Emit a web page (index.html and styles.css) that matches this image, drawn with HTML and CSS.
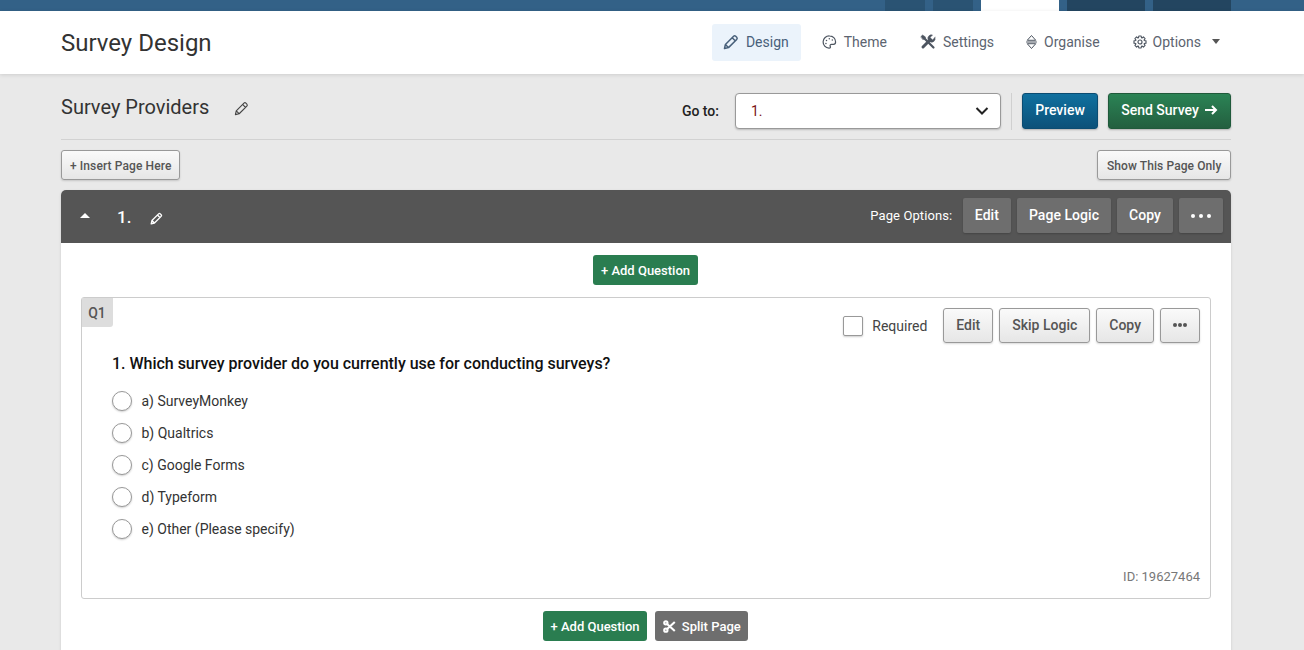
FILE: index.html
```html
<!DOCTYPE html>
<html lang="en">
<head>
<meta charset="utf-8">
<title>Survey Design</title>
<link rel="stylesheet" href="styles.css">
</head>
<body>
<div class="topbar">
  <span class="tab t1"></span><span class="tab t2"></span><span class="tab active"></span><span class="tab t3"></span><span class="tab t4"></span>
</div>
<header class="header">
  <h1 class="title">Survey Design</h1>
  <nav class="nav">
    <a class="nav-item current"><svg class="nav-ic" viewBox="0 0 16 16"><path d="M1.500 14.500l.9-4L10.600 2.300a1.500 1.500 0 0 1 2.100 0l1 1a1.500 1.500 0 0 1 0 2.100l-8.200 8.200zM9.200 3.700l3 3M2.400 10.500l3 3"/></svg><span>Design</span></a>
    <a class="nav-item"><svg class="nav-ic w15" viewBox="0 0 16 16"><path d="M8 1.500a6.500 6.500 0 0 0-.6 13c1.500.1 1.900-.9 1.400-1.800-.6-1.100.1-2.200 1.300-2.200h2.100c1.500 0 2.300-1 2.300-2.600C14.500 4.300 11.600 1.500 8 1.500z"/><circle cx="4.800" cy="6.300" r=".8"/><circle cx="7.800" cy="4.400" r=".8"/><circle cx="11" cy="5.800" r=".8"/><circle cx="4.200" cy="9.500" r=".8"/></svg><span>Theme</span></a>
    <a class="nav-item nudge"><svg class="nav-ic tools" viewBox="0 0 16 16"><path class="driver" d="M3 3l10.500 10.500"/><path class="tip" d="M1 2.500L2.500 1l3 2-.5 2-2 .5z"/><path class="wrench" d="M3 13L10.500 5.500"/><path class="tip" d="M15 3.500l-2.300 2.200-2-.4-.4-2L12.500 1a3.600 3.600 0 0 0-4.500 4.600l2.400 2.400A3.600 3.600 0 0 0 15 3.500z"/></svg><span>Settings</span></a>
    <a class="nav-item"><svg class="nav-ic w11" viewBox="0 0 11 16"><path d="M1.500 6L5.500 1.500 9.500 6zM.5 8h10M1.500 10l4 4.500 4-4.500z"/></svg><span>Organise</span></a>
    <a class="nav-item nudge"><svg class="nav-ic w14" viewBox="0 0 16 16"><polygon points="6.310,3.080 6.660,1.130 9.340,1.130 9.690,3.080 10.280,3.330 11.910,2.200 13.800,4.090 12.670,5.720 12.920,6.310 14.870,6.660 14.870,9.340 12.920,9.690 12.670,10.280 13.800,11.910 11.910,13.800 10.280,12.670 9.690,12.920 9.340,14.870 6.660,14.870 6.310,12.920 5.720,12.670 4.090,13.800 2.200,11.910 3.330,10.280 3.080,9.690 1.130,9.340 1.130,6.660 3.080,6.310 3.330,5.720 2.200,4.090 4.090,2.200 5.720,3.330"/><circle class="hub" cx="8" cy="8" r="2.300"/></svg><span>Options</span><span class="caret"></span></a>
  </nav>
</header>
<main class="main">
  <div class="survey-head">
    <div class="survey-name">
      <h2>Survey Providers</h2>
      <svg class="pencil" viewBox="0 0 16 16"><path d="M1.500 14.500l.9-4L10.600 2.300a1.500 1.500 0 0 1 2.100 0l1 1a1.500 1.500 0 0 1 0 2.100l-8.200 8.200zM9.200 3.700l3 3M2.400 10.500l3 3"/></svg>
    </div>
    <div class="survey-actions">
      <label class="goto-label">Go to:</label>
      <div class="goto"><span>1.</span><svg viewBox="0 0 14 10"><path d="M1.500 2L7 7.500 12.500 2"/></svg></div>
      <span class="divider"></span>
      <button class="btn-lg blue">Preview</button>
      <button class="btn-lg green">Send Survey<svg viewBox="0 0 14 12"><path d="M1 6h11M8 2l4 4-4 4"/></svg></button>
    </div>
  </div>
  <div class="insert-row">
    <button class="btn-sm narrow">+ Insert Page Here</button>
    <button class="btn-sm wide">Show This Page Only</button>
  </div>
  <section class="page">
    <div class="page-bar">
      <div class="page-left">
        <span class="up"></span>
        <span class="page-no">1.</span>
        <svg class="pencil white" viewBox="0 0 16 16"><path d="M1.500 14.500l.9-4L10.600 2.300a1.500 1.500 0 0 1 2.100 0l1 1a1.500 1.500 0 0 1 0 2.100l-8.200 8.200zM9.200 3.700l3 3M2.400 10.500l3 3"/></svg>
      </div>
      <div class="page-right">
        <span class="page-opt">Page Options:</span>
        <button class="btn-dark">Edit</button>
        <button class="btn-dark">Page Logic</button>
        <button class="btn-dark">Copy</button>
        <button class="btn-dark more"><i></i><i></i><i></i></button>
      </div>
    </div>
    <div class="page-body">
      <div class="add-row"><button class="btn-add">+ Add Question</button></div>
      <article class="question">
        <span class="q-tag">Q1</span>
        <div class="q-tools">
          <span class="check"></span><span class="req">Required</span>
          <button class="btn-q">Edit</button>
          <button class="btn-q">Skip Logic</button>
          <button class="btn-q">Copy</button>
          <button class="btn-q dots"><i></i><i></i><i></i></button>
        </div>
        <h3 class="q-text">1. Which survey provider do you currently use for conducting surveys?</h3>
        <ul class="answers">
          <li><span class="radio"></span>a) SurveyMonkey</li>
          <li><span class="radio"></span>b) Qualtrics</li>
          <li><span class="radio"></span>c) Google Forms</li>
          <li><span class="radio"></span>d) Typeform</li>
          <li><span class="radio"></span>e) Other (Please specify)</li>
        </ul>
        <div class="q-id">ID: 19627464</div>
      </article>
      <div class="add-row bottom">
        <button class="btn-add">+ Add Question</button>
        <button class="btn-split"><svg viewBox="0 0 16 16"><circle cx="3.500" cy="3.500" r="2"/><circle cx="3.500" cy="12.500" r="2"/><path d="M5 5l9.500 8.500M5 11L14.500 2.500"/></svg>Split Page</button>
      </div>
    </div>
  </section>
</main>
</body>
</html>
```
FILE: styles.css
```css
* { box-sizing: border-box; }
html, body { margin: 0; padding: 0; height: 650px; overflow: hidden; }
body { background: #e9e9e9; font-family: Roboto, "Liberation Sans", sans-serif; color: #333; }
button { font-family: inherit; cursor: pointer; }

.topbar { height: 11px; background: #336187; display: flex; padding-left: 885px; }
.tab { display: block; height: 11px; background: #2a5373; }
.t1 { width: 40px; margin-right: 8px; }
.t2 { width: 40px; margin-right: 8px; }
.active { width: 78px; background: #fff; margin-right: 8px; }
.t3 { width: 78px; margin-right: 8px; background: #234560; }
.t4 { width: 78px; background: #234560; }

.header { height: 63px; background: #fff; display: flex; align-items: center; justify-content: space-between; padding: 0 73px 0 61px; box-shadow: 0 1px 4px rgba(0,0,0,.12); position: relative; }
.title { margin: 0; font-size: 24px; font-weight: 400; color: #333; }
.nav { display: flex; align-items: center; gap: 10px; }
.nav-item { display: flex; align-items: center; height: 37px; padding: 0 11px; font-size: 14px; color: #5c6470; border-radius: 3px; }
.nav-item span { position: relative; top: -1px; }
.nav-item.nudge { margin-left: 1px; }
.nav-item.current { background: #ebf3fb; color: #48607a; padding-right: 12px; }
.nav-ic { width: 16px; height: 16px; margin-right: 7px; fill: none; stroke: #4d5560; stroke-width: 1.300; stroke-linejoin: round; stroke-linecap: round; flex: none; position: relative; top: -1px; }
.nav-ic circle { fill: #4d5560; stroke-width: 0; }
.nav-ic circle.hub { fill: none; stroke-width: 1.300; }
.current .nav-ic { stroke: #48607a; stroke-width: 1.500; }
.w15 { width: 15px; }
.w14 { width: 14px; margin-right: 6px; }
.w11 { width: 11px; stroke-width: 1; }
.tools .driver { stroke-width: 2.200; }
.tools .wrench { stroke-width: 3; }
.tools .tip { fill: #4d5560; stroke-width: .5; }
.caret { width: 0; height: 0; margin-left: 11px; border: 4.500px solid transparent; border-top: 5px solid #555; border-bottom: 0; }

.main { padding: 0 73px 0 61px; }
.survey-head { height: 66px; display: flex; align-items: center; justify-content: space-between; border-bottom: 1px solid #d2d2d2; padding-top: 9px; }
.survey-name { display: flex; align-items: center; padding-bottom: 8px; }
.survey-name h2 { margin: 0; font-size: 20px; font-weight: 400; color: #333; }
.pencil { width: 15px; height: 15px; margin-left: 25px; margin-top: 3px; fill: none; stroke: #444; stroke-width: 1.200; stroke-linejoin: round; }
.survey-actions { display: flex; align-items: center; }
.goto-label { font-size: 14px; font-weight: 500; color: #222; margin-right: 16px; }
.goto { width: 266px; height: 36px; background: #fff; border: 1px solid #999; border-radius: 4px; display: flex; align-items: center; justify-content: space-between; padding: 0 11px 0 15px; font-size: 14px; color: #7a1515; box-shadow: 0 1px 2px rgba(0,0,0,.2); }
.goto svg { width: 14px; height: 10px; fill: none; stroke: #222; stroke-width: 2; }
.divider { width: 1px; height: 37px; background: #d0d0d0; margin: 0 10px; }
.btn-lg { height: 36px; border-radius: 3px; font-size: 14px; font-weight: 500; color: #fff; display: flex; align-items: center; border: 1px solid; padding: 0 0 2px; justify-content: center; box-shadow: 0 1px 2px rgba(0,0,0,.25); }
.blue { width: 76px; background: linear-gradient(#10709f, #0c5179); border-color: #0b4c72; margin-right: 10px; }
.green { width: 123px; background: linear-gradient(#2b8355, #235f3f); border-color: #205a3b; }
.green svg { width: 14px; height: 12px; margin-left: 5px; fill: none; stroke: #fff; stroke-width: 2; }

.insert-row { display: flex; justify-content: space-between; padding-top: 10px; height: 50px; }
.btn-sm { height: 30px; background: linear-gradient(#fafafa, #e6e6e6); border: 1px solid #999; border-radius: 3px; font-size: 12px; font-weight: 500; color: #555; box-shadow: 0 1px 2px rgba(0,0,0,.15); letter-spacing: .1px; }
.btn-sm.narrow { padding: 1px 8px 0; }
.btn-sm.wide { padding: 1px 8.500px 0; }

.page { background: #fff; border-radius: 5px 5px 0 0; box-shadow: 0 1px 3px rgba(0,0,0,.12); padding-bottom: 40px; }
.page-bar { height: 53px; background: #555; border-radius: 5px 5px 0 0; display: flex; align-items: center; justify-content: space-between; padding: 0 8px 2px 19px; }
.page-left { display: flex; align-items: center; color: #fff; padding-top: 2px; }
.up { width: 0; height: 0; border: 5px solid transparent; border-bottom: 5px solid #fff; border-top: 0; margin-bottom: 3px; }
.page-no { font-size: 17px; font-weight: 500; margin-left: 27px; }
.pencil.white { margin-left: 19px; width: 13px; height: 13px; stroke: #fff; stroke-width: 1.700; margin-top: 3px; }
.page-right { display: flex; align-items: center; }
.page-opt { font-size: 13px; color: #fff; margin-right: 10.500px; letter-spacing: .1px; padding-bottom: 1px; }
.btn-dark { height: 35px; background: #6e6e6e; border: 0; border-radius: 2px; color: #fff; font-size: 14px; font-weight: 500; padding: 0 12px 2px; margin-right: 6px; letter-spacing: .05px; box-shadow: 0 1px 2px rgba(0,0,0,.2); }
.btn-dark:last-child { margin-right: 0; }
.more { width: 44px; display: flex; align-items: center; justify-content: center; gap: 4px; padding: 0; }
.more i { width: 4px; height: 4px; border-radius: 50%; background: #fff; }

.page-body { padding: 12px 20px 0; }
.add-row { display: flex; justify-content: center; height: 30px; margin-bottom: 12px; padding-right: 1px; }
.add-row.bottom { gap: 8px; margin: 12px 0 0; }
.btn-add { height: 30px; background: #2a7d50; border: 0; border-radius: 3px; color: #fff; font-size: 13px; font-weight: 500; padding: 0 7.750px; }
.btn-split { height: 30px; background: #6e6e6e; border: 0; border-radius: 3px; color: #fff; font-size: 13px; font-weight: 500; padding: 0 7.500px; display: flex; align-items: center; }
.btn-split svg { width: 13px; height: 13px; margin-right: 6px; fill: none; stroke: #fff; stroke-width: 2.600; }

.question { position: relative; height: 302px; border: 1px solid #ccc; border-radius: 3px; padding: 0 10px 0 30px; }
.q-tag { position: absolute; left: 0; top: 0; width: 31px; height: 29px; background: #ddd; color: #555; font-size: 14px; font-weight: 500; display: flex; align-items: center; justify-content: center; border-radius: 0 0 3px 0; padding-right: 1px; }
.q-tools { display: flex; align-items: center; justify-content: flex-end; height: 35px; margin-top: 10px; }
.check { width: 20px; height: 20px; border: 1px solid #999; border-radius: 2px; background: #fff; margin-right: 9px; box-shadow: 0 1px 2px rgba(0,0,0,.2); }
.req { font-size: 14px; color: #444; margin-right: 16px; }
.btn-q { height: 35px; padding: 0 12px 2px; margin-right: 6px; background: linear-gradient(#fafafa, #e6e6e6); border: 1px solid #999; border-radius: 3px; font-size: 14px; font-weight: 500; color: #555; box-shadow: 0 1px 2px rgba(0,0,0,.15); }
.btn-q:last-child { margin-right: 0; }
.dots { width: 40px; display: flex; align-items: center; justify-content: center; gap: 1px; padding: 0 0 1px; }
.dots i { width: 4px; height: 4px; border-radius: 50%; background: #555; }
.q-text { margin: 11px 0 0; font-size: 16px; font-weight: 500; color: #111; line-height: 20px; letter-spacing: -.015px; }
.answers { list-style: none; margin: 11px 0 0; padding: 0; }
.answers li { display: flex; align-items: center; height: 32px; font-size: 14px; color: #333; }
.radio { width: 20px; height: 20px; border: 1px solid #999; border-radius: 50%; background: #fff; margin-right: 9.500px; box-shadow: 0 1px 2px rgba(0,0,0,.2); }
.q-id { position: absolute; right: 10px; bottom: 14px; font-size: 13px; color: #777; }
```
